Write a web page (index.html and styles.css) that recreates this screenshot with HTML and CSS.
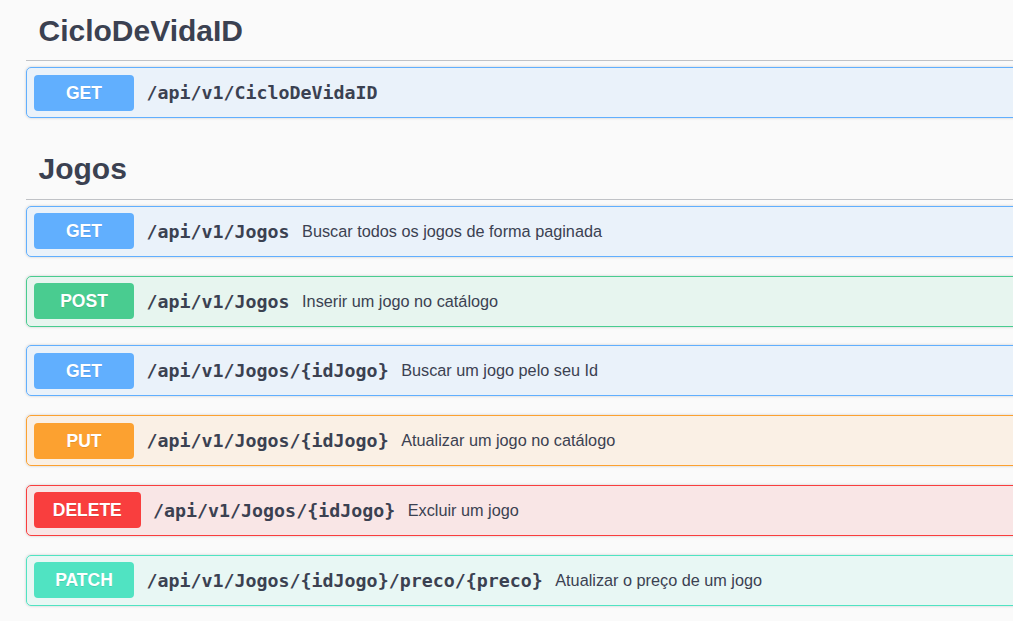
FILE: index.html
```html
<!DOCTYPE html>
<html lang="pt">
<head>
<meta charset="utf-8">
<title>Swagger</title>
<link rel="stylesheet" href="styles.css">
</head>
<body>
<div class="wrapper">
  <section class="tag-section">
    <h3 class="tag">CicloDeVidaID</h3>
    <div class="ops">
      <div class="op op-get">
        <span class="method">GET</span>
        <span class="path">/api/v1/CicloDeVidaID</span>
      </div>
    </div>
  </section>
  <section class="tag-section">
    <h3 class="tag">Jogos</h3>
    <div class="ops">
      <div class="op op-get">
        <span class="method">GET</span>
        <span class="path">/api/v1/Jogos</span>
        <span class="desc">Buscar todos os jogos de forma paginada</span>
      </div>
      <div class="op op-post">
        <span class="method">POST</span>
        <span class="path">/api/v1/Jogos</span>
        <span class="desc">Inserir um jogo no catálogo</span>
      </div>
      <div class="op op-get">
        <span class="method">GET</span>
        <span class="path">/api/v1/Jogos/{idJogo}</span>
        <span class="desc">Buscar um jogo pelo seu Id</span>
      </div>
      <div class="op op-put">
        <span class="method">PUT</span>
        <span class="path">/api/v1/Jogos/{idJogo}</span>
        <span class="desc">Atualizar um jogo no catálogo</span>
      </div>
      <div class="op op-delete">
        <span class="method">DELETE</span>
        <span class="path">/api/v1/Jogos/{idJogo}</span>
        <span class="desc">Excluir um jogo</span>
      </div>
      <div class="op op-patch">
        <span class="method">PATCH</span>
        <span class="path">/api/v1/Jogos/{idJogo}/preco/{preco}</span>
        <span class="desc">Atualizar o preço de um jogo</span>
      </div>
    </div>
  </section>
</div>
</body>
</html>
```

FILE: styles.css
```css
* { box-sizing: border-box; }
html, body {
  margin: 0;
  padding: 0;
  background: #fafafa;
  overflow: hidden;
}
body {
  font-family: "Liberation Sans", Arial, sans-serif;
  color: #3b4151;
}
.wrapper {
  width: 1200px;
  padding: 0 0 0 26px;
}
.tag-section {
  display: flex;
  flex-direction: column;
}
.tag-section + .tag-section {
  margin-top: 2px;
}
.tag {
  margin: 0 0 6px;
  padding: 12.5px 25px 12.5px 12.5px;
  font-size: 30px;
  font-weight: 700;
  line-height: 35px;
  height: 61px;
  border-bottom: 1px solid rgba(59, 65, 81, 0.3);
  color: #3b4151;
  display: flex;
  align-items: center;
}
.op {
  display: flex;
  align-items: center;
  height: 51px;
  padding: 0 7px;
  margin-bottom: 18.8px;
  border: 1px solid;
  border-radius: 5px;
  box-shadow: 0 0 3px rgba(0, 0, 0, 0.19);
}
.method {
  min-width: 100px;
  height: 36px;
  padding: 0 18.75px;
  border-radius: 4px;
  color: #fff;
  font-size: 17.5px;
  font-weight: 700;
  line-height: 36px;
  text-align: center;
  text-shadow: 0 1px 0 rgba(0, 0, 0, 0.1);
}
.path {
  padding: 0 12.5px;
  font-family: "DejaVu Sans Mono", "Liberation Mono", monospace;
  font-size: 18.3px;
  font-weight: 700;
  color: #3b4151;
}
.desc {
  font-size: 16.25px;
  color: #3b4151;
}
.op-get { background: rgba(97, 175, 254, 0.1); border-color: #61affe; }
.op-get .method { background: #61affe; }
.op-post { background: rgba(73, 204, 144, 0.1); border-color: #49cc90; }
.op-post .method { background: #49cc90; }
.op-put { background: rgba(252, 161, 48, 0.1); border-color: #fca130; }
.op-put .method { background: #fca130; }
.op-delete { background: rgba(249, 62, 62, 0.1); border-color: #f93e3e; }
.op-delete .method { background: #f93e3e; }
.op-patch { background: rgba(80, 227, 194, 0.1); border-color: #50e3c2; }
.op-patch .method { background: #50e3c2; }
```
